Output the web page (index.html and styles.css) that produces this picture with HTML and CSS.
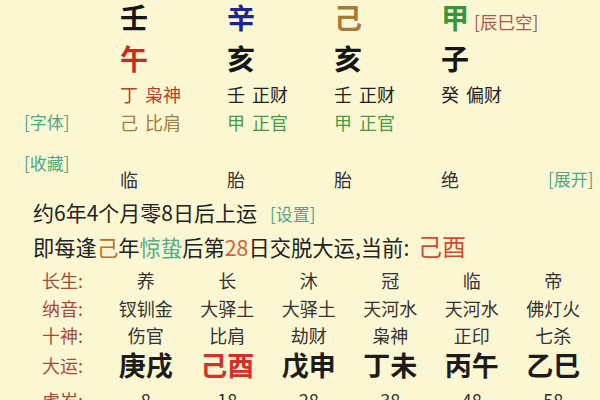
FILE: index.html
```html
<!DOCTYPE html>
<html lang="zh">
<head>
<meta charset="utf-8">
<link rel="stylesheet" href="styles.css">
</head>
<body>
<div class="page">
  <div class="pillars row-gan">
    <div class="side"></div>
    <div class="c-black">壬</div>
    <div class="c-blue">辛</div>
    <div class="c-olive">己</div>
    <div class="c-green">甲<span class="kong">[辰巳空]</span></div>
    <div></div>
  </div>
  <div class="pillars row-zhi">
    <div class="side"></div>
    <div class="c-red">午</div>
    <div class="c-black">亥</div>
    <div class="c-black">亥</div>
    <div class="c-black">子</div>
    <div></div>
  </div>
  <div class="pillars row-hide first">
    <div class="side"></div>
    <div class="h-red">丁<span class="ss">枭神</span></div>
    <div class="h-black">壬<span class="ss">正财</span></div>
    <div class="h-black">壬<span class="ss">正财</span></div>
    <div class="h-black">癸<span class="ss">偏财</span></div>
    <div></div>
  </div>
  <div class="pillars row-hide second">
    <div class="side link">[字体]</div>
    <div class="h-olive">己<span class="ss">比肩</span></div>
    <div class="h-green">甲<span class="ss">正官</span></div>
    <div class="h-green">甲<span class="ss">正官</span></div>
    <div></div>
    <div></div>
  </div>
  <div class="pillars row-ss">
    <div class="side link top">[收藏]</div>
    <div class="ds">临</div>
    <div class="ds">胎</div>
    <div class="ds">胎</div>
    <div class="ds">绝</div>
    <div class="link expand">[展开]</div>
  </div>
  <div class="yun-line l1">约6年4个月零8日后上运<span class="link set">[设置]</span></div>
  <div class="yun-line l2">即每逢<span class="t-ji">己</span>年<span class="t-jz">惊蛰</span>后第<span class="t-num">28</span>日交脱大运,当前: <span class="t-cur">己酉</span></div>
  <div class="table">
    <div class="trow r1">
      <div class="lbl">长生:</div>
      <div>养</div><div>长</div><div>沐</div><div>冠</div><div>临</div><div>帝</div>
    </div>
    <div class="trow r2">
      <div class="lbl">纳音:</div>
      <div>钗钏金</div><div>大驿土</div><div>大驿土</div><div>天河水</div><div>天河水</div><div>佛灯火</div>
    </div>
    <div class="trow r3">
      <div class="lbl">十神:</div>
      <div>伤官</div><div>比肩</div><div>劫财</div><div>枭神</div><div>正印</div><div>七杀</div>
    </div>
    <div class="trow dayun">
      <div class="lbl">大运:</div>
      <div class="dy">庚戌</div><div class="dy cur">己酉</div><div class="dy">戊申</div><div class="dy">丁未</div><div class="dy">丙午</div><div class="dy">乙巳</div>
    </div>
    <div class="trow age">
      <div class="lbl">虚岁:</div>
      <div>8</div><div>18</div><div>28</div><div>38</div><div>48</div><div>58</div>
    </div>
  </div>
</div>
</body>
</html>
```

FILE: styles.css
```css
html, body {
  margin: 0;
  padding: 0;
  background: #fcf7d3;
}
body {
  width: 600px;
  height: 400px;
  overflow: hidden;
  font-family: "Noto Sans CJK SC", "Noto Sans", sans-serif;
  color: #222;
}
.page {
  width: 600px;
}
.pillars {
  display: grid;
  grid-template-columns: 120px repeat(4, 107px) 1fr;
  white-space: nowrap;
}
.side {
  padding-left: 24px;
}
.link {
  color: #52a587;
  font-size: 17px;
}
.row-gan {
  height: 34px;
  line-height: 34px;
  font-size: 28px;
  font-weight: 700;
}
.row-zhi {
  margin-top: 7px;
  height: 34px;
  line-height: 34px;
  font-size: 28px;
  font-weight: 700;
}
.kong {
  font-size: 17.5px;
  font-weight: 400;
  color: #a85a4e;
  margin-left: 5px;
}
.c-black { color: #161616; }
.c-blue { color: #1c2596; }
.c-olive { color: #a77a35; }
.c-green { color: #36953f; }
.c-red { color: #c82a22; }

.row-hide {
  height: 24px;
  line-height: 24px;
  font-size: 18px;
}
.row-hide.first { margin-top: 7px; }
.row-hide.second { margin-top: 4px; }
.row-hide .side { font-size: 17px; }
.ss { margin-left: 7px; }
.h-red { color: #b4432c; }
.h-black { color: #222; }
.h-olive { color: #a37d3c; }
.h-green { color: #4a9a45; }

.row-ss {
  margin-top: 17px;
  height: 40px;
  line-height: 24px;
  font-size: 18px;
  align-items: end;
}
.row-ss .top { align-self: start; }
.ds { color: #333; }
.expand {
  justify-self: end;
  padding-right: 10px;
}

.yun-line {
  padding-left: 33px;
  color: #222;
  white-space: nowrap;
}
.l1 {
  margin-top: 7px;
  line-height: 28px;
  font-size: 21px;
}
.l2 {
  margin-top: 3px;
  line-height: 30px;
  font-size: 21.3px;
}
.set { margin-left: 13px; }
.t-ji { color: #bf6e2c; }
.t-jz { color: #57a98a; }
.t-num { color: #d2603a; }
.t-cur {
  color: #cf4a32;
  font-size: 24px;
  margin-left: 4px;
}

.table {
  margin-top: 4px;
  padding-left: 42px;
}
.trow {
  display: grid;
  grid-template-columns: 63px repeat(6, 81.5px);
  font-size: 18px;
  line-height: 26px;
  text-align: center;
  color: #333;
  white-space: nowrap;
}
.trow.r1 { line-height: 28px; }
.trow.r2 { line-height: 28px; }
.trow .lbl {
  text-align: left;
  color: #a54c3a;
}
.dayun {
  line-height: 34px;
}
.dy {
  font-size: 27px;
  font-weight: 700;
  color: #1c1c1c;
}
.dy.cur { color: #d3302a; }
.age {
  line-height: 36px;
}
```
